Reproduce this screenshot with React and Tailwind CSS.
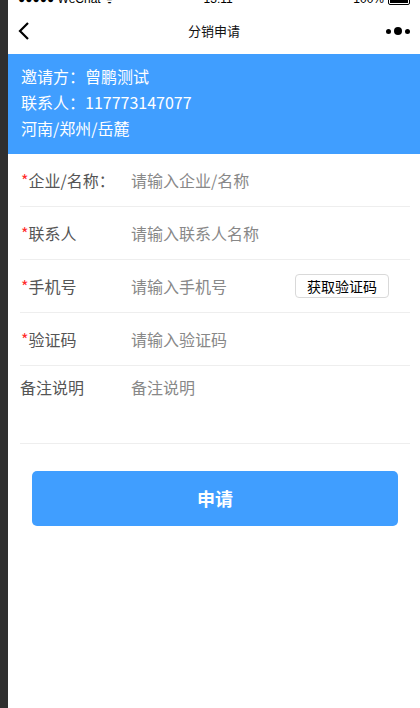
import React from 'react';

const font = { fontFamily: '"Noto Sans CJK SC", "Noto Sans", sans-serif' };

const rows = [
    { label: '企业/名称：', placeholder: '请输入企业/名称', required: true },
    { label: '联系人', placeholder: '请输入联系人名称', required: true },
    { label: '手机号', placeholder: '请输入手机号', required: true, code: true },
    { label: '验证码', placeholder: '请输入验证码', required: true },
];

const App = () => {
    return (
        <div className="flex min-h-[708px] bg-white" style={font}>
            <div className="w-2 shrink-0 bg-[#2f2f2f]"></div>
            <div className="flex-1 flex flex-col bg-white">
                {/* status bar, mostly scrolled off */}
                <div className="h-[8px] overflow-hidden">
                    <div className="-mt-[9px] h-[17px] flex items-center justify-between pl-[10px] pr-[10px] text-[12px] leading-[17px] text-black" style={{ fontFamily: '"Liberation Sans", sans-serif' }}>
                        <span>●●●●● WeChat ᯤ</span>
                        <span className="-ml-8">13:11</span>
                        <span className="flex items-center gap-1">
                            100%
                            <span className="w-[22px] h-[10px] border border-black rounded-[2px] p-[1px]">
                                <span className="block h-full w-full bg-black"></span>
                            </span>
                        </span>
                    </div>
                </div>

                {/* nav bar */}
                <div className="h-[46px] flex items-center justify-between px-[10px]">
                    <svg width="12" height="18" viewBox="0 0 12 18" fill="none" stroke="#000" strokeWidth="2.2">
                        <path d="M10 1 L2 9 L10 17" />
                    </svg>
                    <span className="text-[13px] text-[#111] ml-3">分销申请</span>
                    <div className="flex items-center gap-[3px]">
                        <span className="w-[5px] h-[5px] rounded-full bg-black"></span>
                        <span className="w-[8px] h-[8px] rounded-full bg-black"></span>
                        <span className="w-[5px] h-[5px] rounded-full bg-black"></span>
                    </div>
                </div>

                {/* inviter info */}
                <div className="bg-[#409eff] px-[13px] pt-[9px] pb-[13px] text-white text-[16px] leading-[26px]">
                    <div>邀请方：曾鹏测试</div>
                    <div>联系人：117773147077</div>
                    <div>河南/郑州/岳麓</div>
                </div>

                {/* form */}
                <div className="ml-[12px] mr-[10px]">
                    {rows.map((row, i) => (
                        <div key={i} className="h-[53px] flex items-center border-b border-[#eeeeee] text-[16px]">
                            <div className="w-[111px] shrink-0 pl-[1px] text-[#555]">
                                {row.required && <span className="text-[#ff2b2b]">*</span>}
                                {row.label}
                            </div>
                            <div className="flex-1 text-[#888]">{row.placeholder}</div>
                            {row.code && (
                                <button className="mr-[21px] w-[94px] h-[24px] border border-[#d9d9d9] rounded-[4px] text-[14px] text-black bg-white leading-none">
                                    获取验证码
                                </button>
                            )}
                        </div>
                    ))}
                    <div className="h-[78px] flex items-start pt-[9px] border-b border-[#eeeeee] text-[16px]">
                        <div className="w-[111px] shrink-0 text-[#555]">备注说明</div>
                        <div className="flex-1 text-[#888]">备注说明</div>
                    </div>
                </div>

                <button className="mt-[27px] ml-[24px] mr-[22px] h-[55px] rounded-[5px] bg-[#409eff] text-white text-[18px] font-bold">
                    申请
                </button>
            </div>
        </div>
    );
};

export default App;
